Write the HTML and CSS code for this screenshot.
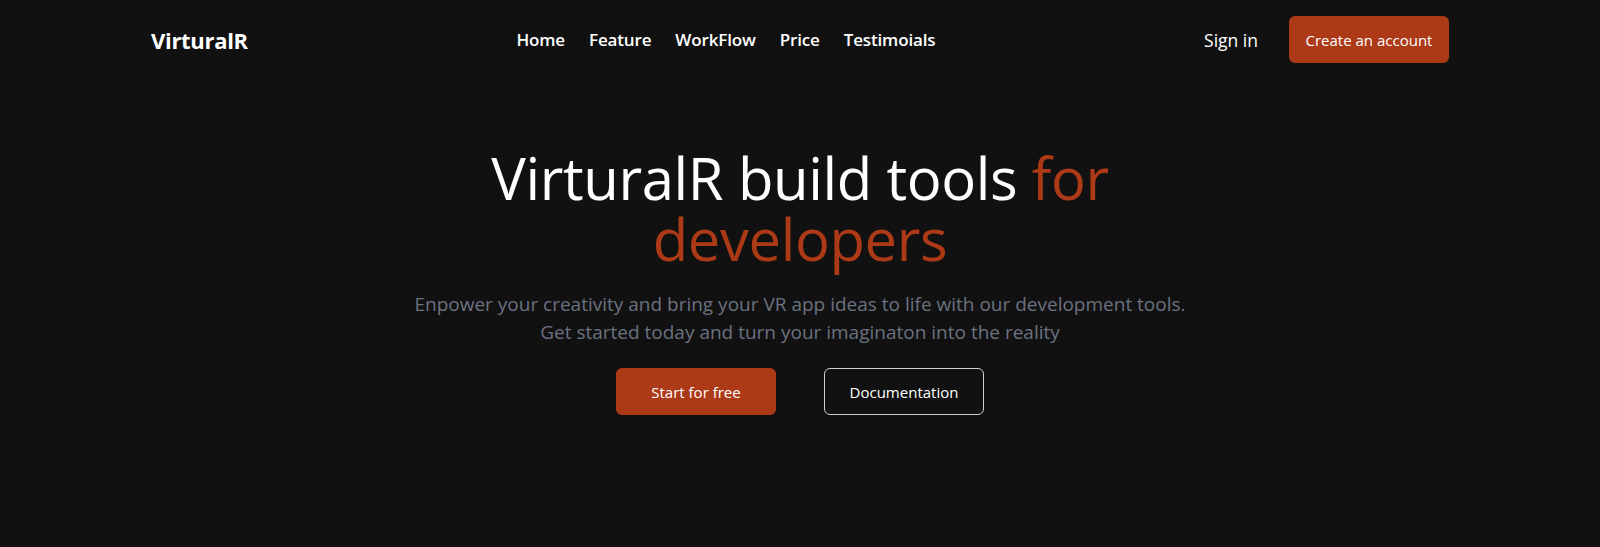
FILE: index.html
```html
<!DOCTYPE html>
<html lang="en">
<head>
<meta charset="utf-8">
<title>VirturalR</title>
<link rel="stylesheet" href="styles.css">
</head>
<body>
<header class="nav">
  <a class="logo" href="#">VirturalR</a>
  <nav class="links">
    <a href="#">Home</a>
    <a href="#">Feature</a>
    <a href="#">WorkFlow</a>
    <a href="#">Price</a>
    <a href="#">Testimoials</a>
  </nav>
  <div class="actions">
    <a class="signin" href="#">Sign in</a>
    <a class="btn btn-primary btn-nav" href="#">Create an account</a>
  </div>
</header>
<main class="hero">
  <h1 class="title">VirturalR build tools <span class="accent">for developers</span></h1>
  <p class="sub">Enpower your creativity and bring your VR app ideas to life with our development tools.<br>Get started today and turn your imaginaton into the reality</p>
  <div class="ctas">
    <a class="btn btn-primary" href="#">Start for free</a>
    <a class="btn btn-outline" href="#">Documentation</a>
  </div>
</main>
</body>
</html>
```
FILE: styles.css
```css
* { box-sizing: border-box; }
html, body { margin: 0; padding: 0; }
body {
  background: #111111;
  color: #ffffff;
  font-family: "Open Sans", "Noto Sans", sans-serif;
  height: 547px;
}
a { color: inherit; text-decoration: none; }
.nav {
  display: flex;
  align-items: center;
  justify-content: space-between;
  padding: 16px 151px 0 151px;
  height: 63px;
}
.logo {
  font-size: 22px;
  font-weight: 700;
  letter-spacing: -0.3px;
}
.links {
  display: flex;
  gap: 24px;
  font-size: 17px;
  font-weight: 600;
  letter-spacing: -0.15px;
}
.actions {
  display: flex;
  align-items: center;
  gap: 31px;
}
.signin { font-size: 17.5px; }
.btn {
  display: inline-flex;
  align-items: center;
  justify-content: center;
  width: 160px;
  height: 47px;
  border-radius: 6px;
  font-size: 15px;
}
.btn-primary { background: #ad3a17; color: #fff; }
.btn-outline { border: 1px solid #cfcfcf; color: #fff; }
.hero {
  display: flex;
  flex-direction: column;
  align-items: center;
  padding-top: 84px;
}
.title {
  margin: 0;
  width: 700px;
  text-align: center;
  font-size: 58px;
  line-height: 61px;
  font-weight: 400;
  letter-spacing: -0.4px;
}
.accent { color: #ad3a17; }
.sub {
  margin: 21px 0 0;
  width: 820px;
  text-align: center;
  font-size: 19px;
  line-height: 28px;
  color: #6b7280;
  letter-spacing: 0;
}
.ctas {
  display: flex;
  gap: 48px;
  margin-top: 22px;
}
```
